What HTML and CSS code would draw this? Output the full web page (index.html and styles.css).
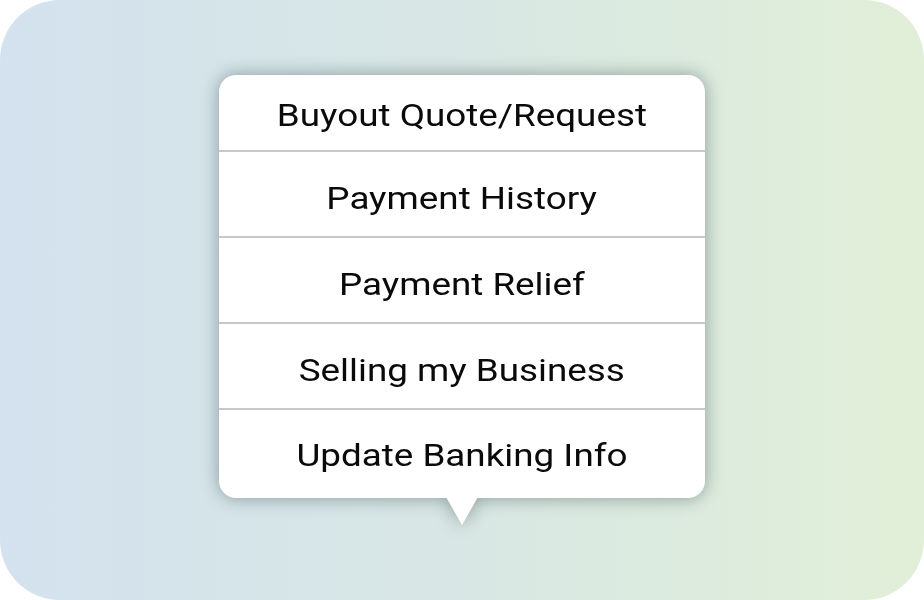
FILE: index.html
```html
<!DOCTYPE html>
<html>
<head>
<meta charset="utf-8">
<link rel="stylesheet" href="styles.css">
</head>
<body>
<div class="canvas">
  <div class="popover">
    <ul class="menu">
      <li class="item first"><span class="label">Buyout Quote/Request</span></li>
      <li class="item"><span class="label">Payment History</span></li>
      <li class="item"><span class="label">Payment Relief</span></li>
      <li class="item"><span class="label">Selling my Business</span></li>
      <li class="item last"><span class="label">Update Banking Info</span></li>
    </ul>
    <div class="tail"></div>
  </div>
</div>
</body>
</html>
```

FILE: styles.css
```css
html, body {
  margin: 0;
  padding: 0;
  background: #ffffff;
}
.canvas {
  width: 924px;
  height: 600px;
  border-radius: 60px;
  background: linear-gradient(90deg, #d3e2ee 0%, #d8e7e4 50%, #e1efd8 100%);
  display: flex;
  justify-content: center;
  padding-top: 75px;
  box-sizing: border-box;
  overflow: hidden;
}
.popover {
  width: 486px;
  display: flex;
  flex-direction: column;
  align-items: center;
  filter: drop-shadow(0 0 9px rgba(40, 60, 60, 0.45));
}
.menu {
  list-style: none;
  margin: 0;
  padding: 0;
  width: 486px;
  background: #ffffff;
  border-radius: 17px;
  font-family: Roboto, "Liberation Sans", sans-serif;
  font-size: 32px;
  color: #0a0a0a;
}
.item {
  box-sizing: border-box;
  height: 86px;
  padding-top: 7px;
  display: flex;
  align-items: center;
  justify-content: center;
  border-bottom: 2px solid #c8c8c8;
}
.label {
  display: inline-block;
  transform: scaleX(1.15);
  white-space: nowrap;
}
.item.first {
  height: 77px;
  padding-top: 4px;
}
.item.last {
  height: 88px;
  padding-top: 2px;
  border-bottom: none;
}
.tail {
  width: 32px;
  height: 28px;
  margin-top: -1px;
  background: #ffffff;
  clip-path: polygon(0 0, 100% 0, 50% 100%);
}
```
